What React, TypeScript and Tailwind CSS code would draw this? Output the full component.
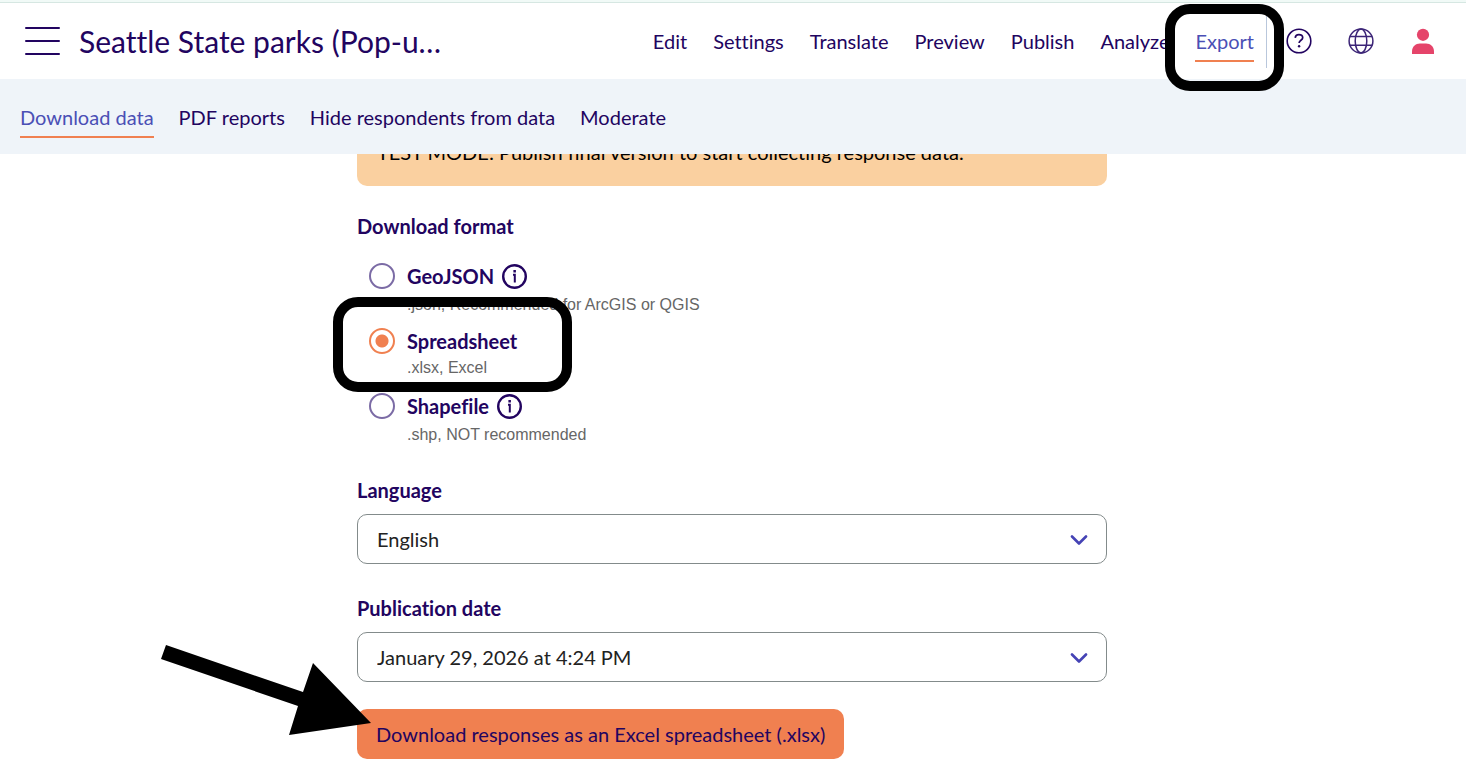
import React, { useState } from 'react';

interface NavLink {
  label: string;
  active?: boolean;
}

interface FormatOption {
  value: string;
  label: string;
  hint: string;
  info?: boolean;
  highlighted?: boolean;
}

const mainLinks: NavLink[] = [
  { label: 'Edit' },
  { label: 'Settings' },
  { label: 'Translate' },
  { label: 'Preview' },
  { label: 'Publish' },
  { label: 'Analyze' },
  { label: 'Export', active: true },
];

const subLinks: NavLink[] = [
  { label: 'Download data', active: true },
  { label: 'PDF reports' },
  { label: 'Hide respondents from data' },
  { label: 'Moderate' },
];

const formats: FormatOption[] = [
  { value: 'geojson', label: 'GeoJSON', hint: '.json, Recommended for ArcGIS or QGIS', info: true },
  { value: 'xlsx', label: 'Spreadsheet', hint: '.xlsx, Excel', highlighted: true },
  { value: 'shp', label: 'Shapefile', hint: '.shp, NOT recommended', info: true },
];

const InfoIcon = () => (
  <svg className="h-[25px] w-[25px]" viewBox="0 0 25 25" fill="none" stroke="#220460">
    <circle cx="12.5" cy="12.5" r="11.3" strokeWidth="2.4" />
    <path d="M11 10.7h1.8v7.8" strokeWidth="2" />
    <rect x="11.4" y="6" width="2.5" height="2.5" fill="#220460" stroke="none" />
  </svg>
);

const HelpIcon = () => (
  <svg className="h-[26px] w-[26px]" viewBox="0 0 26 26" fill="none" stroke="#220460">
    <circle cx="13" cy="13" r="11.8" strokeWidth="1.6" />
    <path d="M9.2 9.8c.2-2 1.7-3.1 3.7-3.1 2.2 0 3.8 1.2 3.8 3.1 0 2.5-3.6 2.5-3.6 5.2" strokeWidth="1.7" />
    <circle cx="13.1" cy="18.2" r="1.2" fill="#220460" stroke="none" />
  </svg>
);

const GlobeIcon = () => (
  <svg className="h-[26px] w-[26px]" viewBox="0 0 26 26" fill="none" stroke="#3c2577" strokeWidth="1.5">
    <circle cx="13" cy="13" r="11.9" />
    <ellipse cx="13" cy="13" rx="5.8" ry="11.9" />
    <path d="M1.8 8.5h22.4M1.8 17.3h22.4" />
  </svg>
);

const UserIcon = () => (
  <svg className="h-[26px] w-[22px]" viewBox="0 0 22 26" fill="#e5446a">
    <circle cx="11" cy="6.8" r="6.1" />
    <path d="M0 26v-2.5c0-4.800 3.500-8 8-8h6c4.500 0 8 3.200 8 8v2.500z" />
  </svg>
);

const ChevronIcon = () => (
  <svg
    className="pointer-events-none absolute right-[19px] top-1/2 h-3 w-[18px] -translate-y-1/2"
    viewBox="0 0 18 12"
    fill="none"
    stroke="#4543b5"
    strokeWidth="2.6"
    strokeLinecap="round"
    strokeLinejoin="round"
  >
    <path d="M2 3.5l7 7 7-7" />
  </svg>
);

interface SelectFieldProps {
  id: string;
  label: string;
  options: string[];
}

const SelectField: React.FC<SelectFieldProps> = ({ id, label, options }) => (
  <div>
    <label htmlFor={id} className="mb-3 block text-xl/6 font-bold">
      {label}
    </label>
    <div className="relative">
      <select
        id={id}
        className="block h-[50px] w-full appearance-none rounded-[10px] border border-[#838b8b] bg-white px-[19px] text-xl/7 text-[#222222]"
      >
        {options.map((option) => (
          <option key={option}>{option}</option>
        ))}
      </select>
      <ChevronIcon />
    </div>
  </div>
);

const App: React.FC = () => {
  const [format, setFormat] = useState('xlsx');

  return (
    <div className="min-h-screen overflow-hidden bg-white font-['Lato',sans-serif] text-[#220460] [font-variant-ligatures:none]">
      <div className="h-[3px] border-b border-[#d6e7e2] bg-[#f1faf7]" />

      {/* Header */}
      <header className="relative z-20 flex h-[76px] items-center bg-white pl-[25px] pr-8">
        <button aria-label="Menu" className="flex flex-col gap-[11px]">
          <span className="h-0.5 w-[35px] rounded bg-[#220460]" />
          <span className="h-0.5 w-[35px] rounded bg-[#220460]" />
          <span className="h-0.5 w-[35px] rounded bg-[#220460]" />
        </button>
        <h1 className="ml-[19px] text-3xl/9">Seattle State parks (Pop-u…</h1>

        <nav className="ml-auto flex items-center gap-[26px] text-xl/6">
          {mainLinks.map((link) =>
            link.active ? (
              <a key={link.label} href="#" className="relative border-b-2 border-[#f08050] pb-[7px] pt-[9px] text-[#4a4fb5]">
                {link.label}
                <span className="pointer-events-none absolute -inset-x-[30px] -bottom-[31px] -top-4 rounded-[25px] border-10 border-black" />
              </a>
            ) : (
              <a key={link.label} href="#">
                {link.label}
              </a>
            )
          )}
        </nav>

        <div className="-z-10 ml-3 flex items-center border-l border-[#b9c7dc] py-3.5 pl-[19px]">
          <button aria-label="Help">
            <HelpIcon />
          </button>
          <button aria-label="Language" className="ml-9">
            <GlobeIcon />
          </button>
          <button aria-label="Account" className="ml-[38px]">
            <UserIcon />
          </button>
        </div>
      </header>

      {/* Section tabs */}
      <nav className="relative z-10 flex h-[75px] items-center gap-[25px] bg-[#eff4f9] px-5 text-xl/6">
        {subLinks.map((link) => (
          <a
            key={link.label}
            href="#"
            className={
              link.active
                ? 'border-b-2 border-[#f08050] pb-[7px] pt-[9px] text-[#4a4fb5]'
                : 'border-b-2 border-transparent pb-[7px] pt-[9px]'
            }
          >
            {link.label}
          </a>
        ))}
      </nav>

      <main className="pr-0.5">
        <div className="mx-auto max-w-[750px]">
          <div className="-mt-9 mb-7 rounded-[10px] bg-[#fad0a0] px-5 py-[22px] text-xl/6 text-black">
            TEST MODE: Publish final version to start collecting response data.
          </div>

          <fieldset>
            <legend className="mb-[22px] text-xl/6 font-bold">Download format</legend>
            <div className="flex flex-col gap-[9px] pl-3">
              {formats.map((option) => (
                <div key={option.value} className="relative grid grid-cols-[26px_1fr] items-center gap-x-3">
                  <input
                    id={option.value}
                    type="radio"
                    name="format"
                    checked={format === option.value}
                    onChange={() => setFormat(option.value)}
                    className="h-[26px] w-[26px] appearance-none rounded-full border-2 border-[#7b6ba5] checked:border-[#f08050] checked:bg-[radial-gradient(circle,#f08050_6px,transparent_7px)]"
                  />
                  <div className={option.info ? 'flex h-8 items-center gap-2' : 'flex h-7 items-center'}>
                    <label htmlFor={option.value} className="text-xl/6 font-bold">
                      {option.label}
                    </label>
                    {option.info && <InfoIcon />}
                  </div>
                  <p className="col-start-2 font-['Liberation_Sans',sans-serif] text-base/[26px] text-[#666666]">
                    {option.hint}
                  </p>
                  {option.highlighted && (
                    <span className="pointer-events-none absolute -left-9 -top-[30px] h-[95px] w-[239px] rounded-[25px] border-10 border-black" />
                  )}
                </div>
              ))}
            </div>
          </fieldset>

          <div className="mt-[30px] flex flex-col gap-8">
            <SelectField id="language" label="Language" options={['English']} />
            <SelectField id="publication-date" label="Publication date" options={['January 29, 2026 at 4:24 PM']} />
          </div>

          <div className="relative mt-[27px]">
            <button className="h-[50px] rounded-[10px] bg-[#f08050] px-[19px] text-xl/7">
              Download responses as an Excel spreadsheet (.xlsx)
            </button>
            <svg
              className="pointer-events-none absolute -left-[197px] -top-[65px] h-[92px] w-[212px]"
              viewBox="0 0 212 92"
            >
              <path d="M6 1L143 48L153 19L211 79L129 91L138 62L1 15z" />
            </svg>
          </div>
        </div>
      </main>
    </div>
  );
};

export default App;
